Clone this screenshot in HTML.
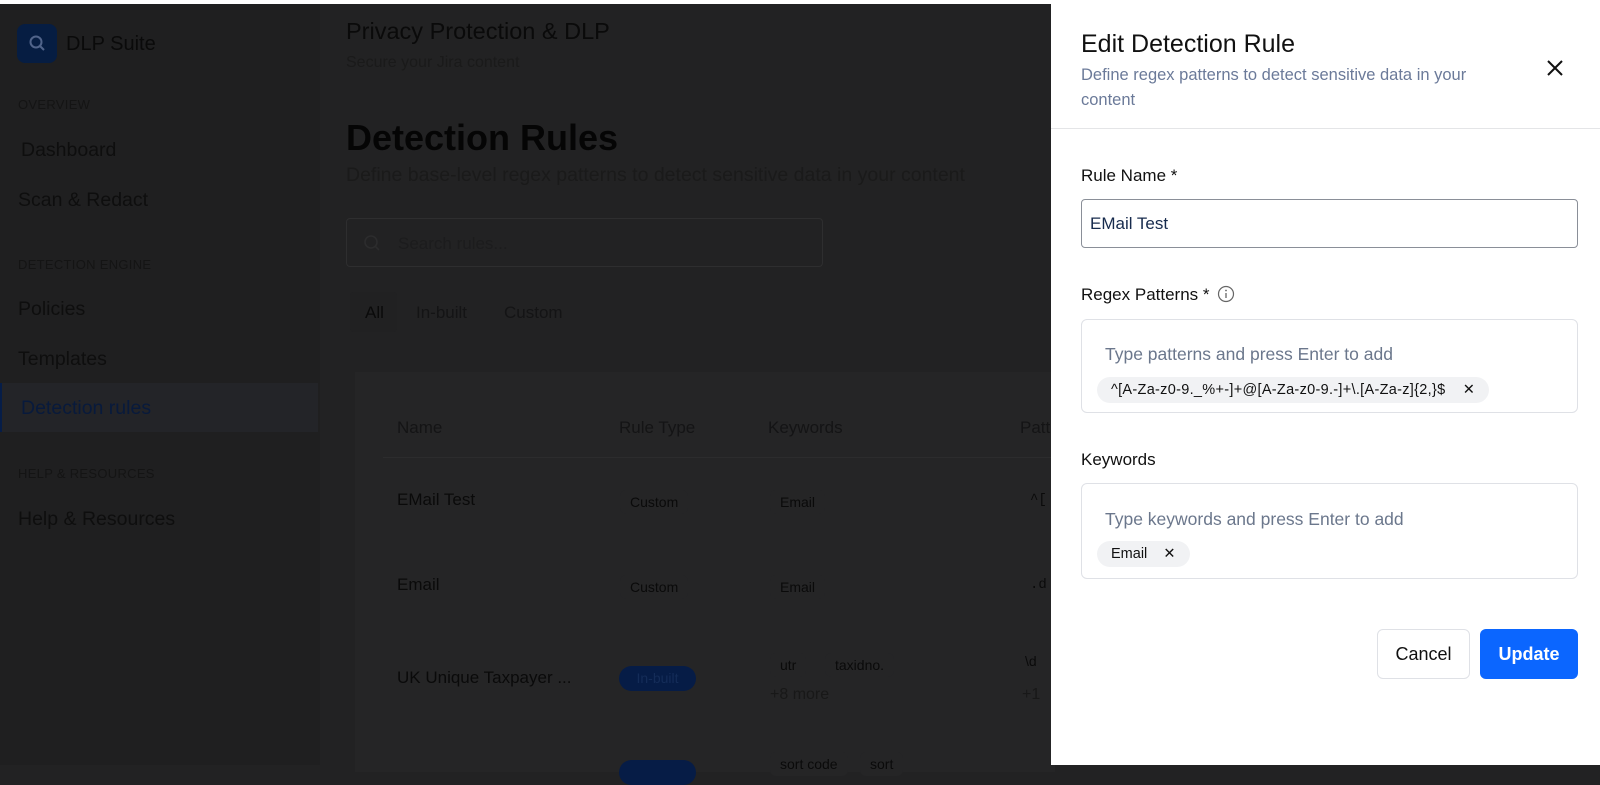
<!DOCTYPE html>
<html><head><meta charset="utf-8"><style>
*{box-sizing:border-box;margin:0;padding:0}
body{width:1600px;height:765px;overflow:hidden;font-family:"Liberation Sans",sans-serif;background:#222223;position:relative;color:#0a0a0a}
.a{position:absolute;white-space:nowrap}
.top{position:absolute;left:0;top:0;width:1600px;height:4px;background:#fff}
.side{position:absolute;left:0;top:4px;width:320px;height:761px;background:#1f1f20}
.sec{font-size:13px;color:#141414;letter-spacing:.3px}
.nav{font-size:19.5px;color:#0e0e0e}
.chip{position:absolute;background:#252526;border-radius:6px;font-size:14px;color:#0a0a0a;padding:4px 10px}
.drawer{position:absolute;left:1051px;top:4px;width:549px;height:761px;background:#fff}
.lbl{font-size:17px;font-weight:500;color:#111}
.box{position:absolute;left:30px;width:497px;border:1px solid #dfe1e6;border-radius:6px;background:#fff}
.ph{font-size:17.5px;color:#6b778c}
.tag{position:absolute;background:#f1f2f4;border-radius:13px;font-size:14.5px;color:#111;height:26px;line-height:26px;padding:0 14px}
</style></head><body>
<div class="top"></div>
<div class="side"></div>
<div class="a" style="left:17px;top:24px;width:40px;height:39px;background:#061d42;border-radius:8px"></div>
<svg class="a" style="left:27px;top:33px" width="20" height="20" viewBox="0 0 20 20"><circle cx="9" cy="9" r="5.5" fill="none" stroke="#51648a" stroke-width="2"/><path d="M13 13l4 4" stroke="#51648a" stroke-width="2"/></svg>
<div class="a" style="left:66px;top:33px;font-size:20px;color:#0a0a0a">DLP Suite</div>
<div class="a sec" style="left:18px;top:97px">OVERVIEW</div>
<div class="a nav" style="left:21px;top:139px">Dashboard</div>
<div class="a nav" style="left:18px;top:189px">Scan &amp; Redact</div>
<div class="a sec" style="left:18px;top:257px">DETECTION ENGINE</div>
<div class="a nav" style="left:18px;top:298px">Policies</div>
<div class="a nav" style="left:18px;top:348px">Templates</div>
<div class="a" style="left:0;top:383px;width:318px;height:49px;background:#232428"></div>
<div class="a" style="left:0;top:383px;width:2px;height:49px;background:#061d48"></div>
<div class="a nav" style="left:21px;top:397px;color:#081a3c">Detection rules</div>
<div class="a sec" style="left:18px;top:466px">HELP &amp; RESOURCES</div>
<div class="a nav" style="left:18px;top:508px">Help &amp; Resources</div>

<div class="a" style="left:346px;top:18px;font-size:23.5px;color:#0a0a0a">Privacy Protection &amp; DLP</div>
<div class="a" style="left:346px;top:54px;font-size:16px;color:#1a1a1a">Secure your Jira content</div>
<div class="a" style="left:346px;top:117px;font-size:36px;font-weight:bold;color:#050505">Detection Rules</div>
<div class="a" style="left:346px;top:164px;font-size:19.5px;color:#1a1a1a">Define base-level regex patterns to detect sensitive data in your content</div>
<div class="a" style="left:346px;top:218px;width:477px;height:49px;border:1px solid #2e2e2f;border-radius:4px;background:#222223"></div>
<svg class="a" style="left:362px;top:233px" width="20" height="20" viewBox="0 0 20 20"><circle cx="9" cy="9" r="6" fill="none" stroke="#2c2c2d" stroke-width="1.6"/><path d="M13.5 13.5l3.5 3.5" stroke="#2c2c2d" stroke-width="1.6"/></svg>
<div class="a" style="left:398px;top:234px;font-size:17px;color:#1c1c1d">Search rules...</div>
<div class="a" style="left:350px;top:292px;width:47px;height:40px;background:#212122;border-radius:4px"></div>
<div class="a" style="left:365px;top:303px;font-size:17px;color:#0a0a0a">All</div>
<div class="a" style="left:416px;top:303px;font-size:17px;color:#141415">In-built</div>
<div class="a" style="left:504px;top:303px;font-size:17px;color:#141415">Custom</div>

<div class="a" style="left:355px;top:372px;width:700px;height:400px;background:#252526"></div>
<div class="a" style="left:397px;top:418px;font-size:17px;color:#141415">Name</div>
<div class="a" style="left:619px;top:418px;font-size:17px;color:#141415">Rule Type</div>
<div class="a" style="left:768px;top:418px;font-size:17px;color:#141415">Keywords</div>
<div class="a" style="left:1020px;top:418px;font-size:17px;color:#141415">Patt</div>
<div class="a" style="left:383px;top:457px;width:668px;height:1px;background:#2c2c2d"></div>

<div class="a" style="left:397px;top:490px;font-size:17px;color:#0a0a0a">EMail Test</div>
<div class="chip" style="left:620px;top:490px">Custom</div>
<div class="chip" style="left:770px;top:490px">Email</div>
<div class="a" style="left:1030px;top:492px;font-size:14px;color:#0a0a0a;font-family:'Liberation Mono',monospace">^[</div>
<div class="a" style="left:397px;top:575px;font-size:17px;color:#0a0a0a">Email</div>
<div class="chip" style="left:620px;top:575px">Custom</div>
<div class="chip" style="left:770px;top:575px">Email</div>
<div class="a" style="left:1030px;top:577px;font-size:14px;color:#0a0a0a;font-family:'Liberation Mono',monospace">.d</div>
<div class="a" style="left:397px;top:668px;font-size:17px;color:#0a0a0a">UK Unique Taxpayer ...</div>
<div class="a" style="left:619px;top:666px;width:77px;height:25px;border-radius:13px;background:#061c46;color:#142c58;font-size:14px;text-align:center;line-height:25px">In-built</div>
<div class="chip" style="left:770px;top:653px">utr</div>
<div class="chip" style="left:825px;top:653px">taxidno.</div>
<div class="a" style="left:770px;top:686px;font-size:16px;color:#181818">+8 more</div>
<div class="a" style="left:1025px;top:653px;font-size:14px;color:#0a0a0a">\d</div>
<div class="a" style="left:1022px;top:686px;font-size:16px;color:#181818">+1</div>
<div class="chip" style="left:770px;top:752px">sort code</div>
<div class="chip" style="left:860px;top:752px">sort</div>
<div class="a" style="left:619px;top:760px;width:77px;height:25px;border-radius:13px;background:#061c46"></div>

<div class="drawer">
<div class="a" style="left:30px;top:26px;font-size:25px;color:#111">Edit Detection Rule</div>
<div class="a" style="left:30px;top:59px;font-size:16.5px;color:#6b7a99;line-height:25px;white-space:normal;width:420px">Define regex patterns to detect sensitive data in your content</div>
<svg class="a" style="left:494px;top:54px" width="20" height="20" viewBox="0 0 20 20"><path d="M3 3l14 14M17 3L3 17" stroke="#111" stroke-width="2"/></svg>
<div class="a" style="left:0;top:124px;width:549px;height:1px;background:#e4e5e7"></div>
<div class="a lbl" style="left:30px;top:162px">Rule Name *</div>
<div class="box" style="top:195px;height:49px;border-color:#8a8f98;border-radius:4px"><div class="a" style="left:8px;top:14px;font-size:17px;color:#172b4d">EMail Test</div></div>
<div class="a lbl" style="left:30px;top:281px">Regex Patterns *</div>
<svg class="a" style="left:166px;top:281px" width="18" height="18" viewBox="0 0 18 18"><circle cx="9" cy="9" r="7.5" fill="none" stroke="#666" stroke-width="1.2"/><path d="M9 8v5" stroke="#666" stroke-width="1.3"/><circle cx="9" cy="5.5" r=".9" fill="#666"/></svg>
<div class="box" style="top:315px;height:94px">
<div class="a ph" style="left:23px;top:24px">Type patterns and press Enter to add</div>
<div class="tag" style="left:15px;top:57px;letter-spacing:.3px">^[A-Za-z0-9._%+-]+@[A-Za-z0-9.-]+\.[A-Za-z]{2,}$ &nbsp;&nbsp;&nbsp;✕</div>
</div>
<div class="a lbl" style="left:30px;top:446px">Keywords</div>
<div class="box" style="top:479px;height:96px">
<div class="a ph" style="left:23px;top:25px">Type keywords and press Enter to add</div>
<div class="tag" style="left:15px;top:57px;font-size:14.5px">Email &nbsp;&nbsp;&nbsp;✕</div>
</div>
<div class="a" style="left:326px;top:625px;width:93px;height:50px;border:1px solid #dfe1e6;border-radius:6px;font-size:18px;text-align:center;line-height:48px;color:#111">Cancel</div>
<div class="a" style="left:429px;top:625px;width:98px;height:50px;background:#0b66ff;border-radius:6px;font-size:18px;font-weight:bold;text-align:center;line-height:50px;color:#fff">Update</div>
</div>
</body></html>
